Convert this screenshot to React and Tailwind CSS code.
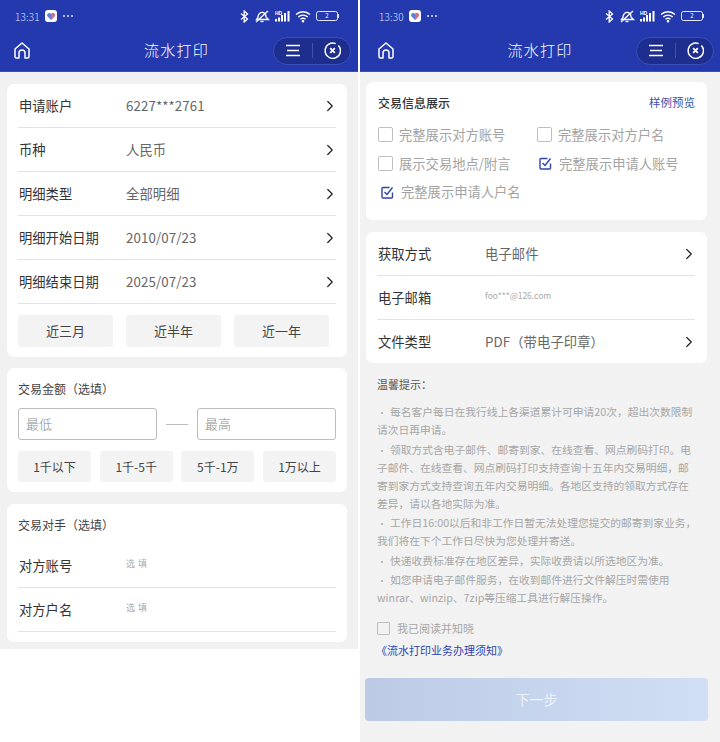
import { ChevronRight } from "lucide-react";

const FONT = "[font-family:'Noto_Sans_CJK_SC','Noto_Sans',sans-serif]";

function StatusBar({ time, pl }) {
  return (
    <div className={`flex h-[30px] items-center justify-between pt-[2px] text-white ${pl}`}>
      <div className="flex items-center">
        <span className="w-[24px] text-[10px] font-light tracking-[0.2px] text-[#dfe3f6]">{time}</span>
        <div className="ml-[6px] flex h-[12px] w-[12px] items-center justify-center rounded-[3px] bg-white">
          <svg width="8" height="7" viewBox="0 0 8 7">
            <path d="M4 7 0.6 3.4C-.6 1.8.7 0 2.2 0 3 0 3.6.4 4 1 4.4.4 5 0 5.8 0 7.3 0 8.600 1.800 7.400 3.400Z" fill="#5b7fd6" />
            <path d="M4 7 4 1C4.400.4 5 0 5.800 0 7.300 0 8.600 1.800 7.400 3.400Z" fill="#e0668c" />
          </svg>
        </div>
        <span className="ml-[6px] flex gap-[2px]">
          <i className="h-[2px] w-[2px] rounded-full bg-[#dfe3f6]" />
          <i className="h-[2px] w-[2px] rounded-full bg-[#dfe3f6]" />
          <i className="h-[2px] w-[2px] rounded-full bg-[#dfe3f6]" />
        </span>
      </div>
      <div className="flex items-center gap-[4px]">
        <svg width="9" height="13" viewBox="0 0 9 13" fill="none" stroke="#fff" strokeWidth="1.300">
          <path d="M1 3.500 7.500 9 4.200 12V1L7.500 4 1 9.500" />
        </svg>
        <svg width="18" height="13" viewBox="0 0 18 13" fill="none" stroke="#fff" strokeWidth="1.300">
          <path d="M5 6.500C6 3 8 2 10 2.500 12 3 13 4.500 13 7L15.500 9.500H3.500L5 7.500Z" />
          <path d="M7.500 11.500H10.500" />
          <path d="M3 12 15 1" />
        </svg>
        <svg width="16" height="13" viewBox="0 0 16 13">
          <rect x="0" y="9" width="2" height="2.500" fill="#fff" />
          <rect x="3" y="7.500" width="2" height="4" fill="#fff" />
          <rect x="6" y="5" width="2" height="6.500" fill="#fff" />
          <rect x="9" y="3" width="2" height="8.500" fill="#fff" />
          <rect x="12.500" y="1" width="2" height="10.500" fill="#fff" />
          <text x="0" y="5" fontSize="5" fontWeight="700" fill="#fff" fontFamily="Liberation Sans">HD</text>
        </svg>
        <svg width="16" height="13" viewBox="0 0 16 13" fill="none" stroke="#fff" strokeWidth="1.400">
          <path d="M1 4.500C5 .8 11 .8 15 4.500" />
          <path d="M3.300 7C6 4.500 10 4.500 12.700 7" />
          <path d="M5.500 9.300C7 8 9 8 10.500 9.300" />
          <circle cx="8" cy="11.300" r=".6" />
        </svg>
        <div className="ml-[1px] flex items-center">
          <div className="flex h-[10px] w-[22px] items-center justify-center rounded-[2.500px] border border-[#e4e7f6] text-[6px] leading-none text-white">2</div>
          <div className="h-[4px] w-[1px] bg-[#e4e7f6]" />
        </div>
      </div>
    </div>
  );
}

function Header({ time, statusPl, navPl, navPr, barPr, titleShift }) {
  return (
    <div className={`h-[72px] shrink-0 border-b border-[#3d50b6] bg-[#2439ae] ${FONT}`}>
      <div className={barPr}>
        <StatusBar time={time} pl={statusPl} />
      </div>
      <div className={`flex h-[41px] items-center justify-between ${navPl} ${navPr}`}>
        <svg width="16" height="17" viewBox="0 0 16 17" fill="none" stroke="#fff" strokeWidth="1.500" strokeLinejoin="round">
          <path d="M1 7 8 1l7 6v7.500a1.500 1.500 0 0 1-1.500 1.500H11v-5a3 3 0 0 0-6 0v5H2.500A1.500 1.500 0 0 1 1 14.500Z" />
        </svg>
        <span className={`${titleShift} text-[15px] font-light tracking-[1.200px] text-white [font-family:'Noto_Sans_CJK_JP',sans-serif]`}>流水打印</span>
        <div className="flex h-[28px] w-[78px] items-center justify-between rounded-full border border-[#3a4fb8] bg-[#1d2e8f] pr-[9px] pl-[12px]">
          <svg width="14" height="13" viewBox="0 0 14 13" fill="none" stroke="#fff" strokeWidth="1.500">
            <path d="M0 1.500H14M1 6.500H13M0 11.500H14" />
          </svg>
          <div className="h-[15px] w-px bg-[#3f52b3]" />
          <svg width="17" height="17" viewBox="0 0 16 16" fill="none" stroke="#fff" strokeWidth="1.400">
            <path d="M13.500 3.200A7.200 7.200 0 1 1 11 1.500" />
            <path d="M5.800 5.800l4.400 4.400M10.200 5.800l-4.400 4.400" strokeWidth="1.700" />
          </svg>
        </div>
      </div>
    </div>
  );
}

function Row({ label, value, arrow, small, h = "h-[44px]" }) {
  return (
    <div className={`flex items-center border-b border-[#e3e3e3] ${h}`}>
      <span className="w-[107px] shrink-0 pl-px text-[13.300px] text-[#333]">{label}</span>
      {small === "hint" && <span className="-mt-[3px] pl-px text-[9px] tracking-[3px] text-[#aaa]">{value}</span>}
      {small === "mail" && <span className="-mt-[4px] pl-px text-[8.500px] text-[#aaa]">{value}</span>}
      {!small && <span className="pl-px text-[13.300px] tracking-[0.100px] text-[#666]">{value}</span>}
      {arrow && <ChevronRight className="-mr-[3px] ml-auto text-[#222]" size={18} strokeWidth={1.600} />}
    </div>
  );
}

function Chip({ children, className }) {
  return (
    <div className={`flex items-center justify-center rounded-[3px] bg-[#f3f3f3] text-[#444] ${className}`}>
      {children}
    </div>
  );
}

function Money({ text }) {
  return (
    <div className="flex h-[32px] w-[139px] items-center rounded-[3px] border border-[#bdbdbd] px-[7px] text-[13px] font-light text-[#888]">
      {text}
    </div>
  );
}

function Left() {
  return (
    <div className="flex w-[358px] shrink-0 flex-col">
      <Header
        time="13:31"
        statusPl="pl-[15px]"
        barPr="pr-[19px]"
        navPl="pl-[14px]"
        navPr="pr-[7px]"
        titleShift="translate-x-[25px]"
      />
      <div className="flex h-[577px] flex-col bg-[#f1f1f1] pt-[12px] pr-[11px] pl-[7px]">
        <div className="h-[273px] rounded-[7px] bg-white px-[11px]">
          <Row label="申请账户" value="6227***2761" arrow />
          <Row label="币种" value="人民币" arrow />
          <Row label="明细类型" value="全部明细" arrow />
          <Row label="明细开始日期" value="2010/07/23" arrow />
          <Row label="明细结束日期" value="2025/07/23" arrow />
          <div className="mt-[11px] flex gap-[13px]">
            <Chip className="h-[32px] w-[95px] text-[13px]">近三月</Chip>
            <Chip className="h-[32px] w-[95px] text-[13px]">近半年</Chip>
            <Chip className="h-[32px] w-[95px] text-[13px]">近一年</Chip>
          </div>
        </div>
        <div className="mt-[11px] h-[124px] rounded-[7px] bg-white px-[11px] pt-[12px]">
          <div className="h-[18px] text-[12px] leading-[18px] text-[#444]">交易金额（选填）</div>
          <div className="mt-[10px] flex items-center justify-between">
            <Money text="最低" />
            <div className="h-px w-[22px] bg-[#bdbdbd]" />
            <Money text="最高" />
          </div>
          <div className="mt-[11px] flex justify-between">
            <Chip className="h-[31px] w-[73px] text-[12px]">1千以下</Chip>
            <Chip className="h-[31px] w-[73px] text-[12px]">1千-5千</Chip>
            <Chip className="h-[31px] w-[73px] text-[12px]">5千-1万</Chip>
            <Chip className="h-[31px] w-[73px] text-[12px]">1万以上</Chip>
          </div>
        </div>
        <div className="mt-[12px] h-[138px] rounded-[7px] bg-white px-[11px] pt-[12px]">
          <div className="h-[18px] text-[12px] leading-[18px] text-[#444]">交易对手（选填）</div>
          <Row label="对方账号" value="选填" small="hint" h="h-[54px] pt-[10px]" />
          <Row label="对方户名" value="选填" small="hint" />
        </div>
      </div>
    </div>
  );
}

function Box({ checked, className = "" }) {
  if (checked) {
    return (
      <svg className={`shrink-0 ${className}`} width="13" height="13" viewBox="0 0 13 13" fill="none" stroke="#2f45ad" strokeWidth="1.400">
        <path d="M11.500 6.500V11a1 1 0 0 1-1 1H2a1 1 0 0 1-1-1V2.500a1 1 0 0 1 1-1h6.500" />
        <path d="M3.500 6 6 8.500 11.500 1.500" />
      </svg>
    );
  }
  return <div className={`h-[15px] w-[15px] shrink-0 rounded-[2px] border border-[#bfbfbf] ${className}`} />;
}

function Opt({ checked, text, w, className = "" }) {
  return (
    <div className={`flex items-center ${w} ${className}`}>
      <Box checked={checked} className={checked ? "ml-[2px]" : ""} />
      <span className={`${checked ? "ml-[7px]" : "ml-[6px]"} text-[13.300px] text-[#a3a3a3]`}>{text}</span>
    </div>
  );
}

const tips = [
  "每名客户每日在我行线上各渠道累计可申请20次，超出次数限制请次日再申请。",
  "领取方式含电子邮件、邮寄到家、在线查看、网点刷码打印。电子邮件、在线查看、网点刷码打印支持查询十五年内交易明细，邮寄到家方式支持查询五年内交易明细。各地区支持的领取方式存在差异，请以各地实际为准。",
  "工作日16:00以后和非工作日暂无法处理您提交的邮寄到家业务，我们将在下个工作日尽快为您处理并寄送。",
  "快递收费标准存在地区差异，实际收费请以所选地区为准。",
  "如您申请电子邮件服务，在收到邮件进行文件解压时需使用winrar、winzip、7zip等压缩工具进行解压操作。",
];

function Right() {
  return (
    <div className="flex h-[742px] w-[360px] shrink-0 flex-col bg-[#f2f2f2]">
      <Header
        time="13:30"
        statusPl="pl-[19px]"
        barPr="pr-[16px]"
        navPl="pl-[18px]"
        navPr="pr-[6px]"
        titleShift="translate-x-[25px]"
      />
      <div className="flex flex-1 flex-col pt-[10px] pr-[13px] pl-[6px]">
        <div className="h-[138px] rounded-[7px] bg-white px-[12px] pt-[12px]">
          <div className="flex items-center justify-between">
            <span className="text-[12px] font-medium text-[#333]">交易信息展示</span>
            <span className="text-[11.500px] text-[#3b50ad]">样例预览</span>
          </div>
          <div className="mt-[8px] flex h-[29px] items-center">
            <Opt text="完整展示对方账号" w="w-[159px]" />
            <Opt text="完整展示对方户名" />
          </div>
          <div className="flex h-[29px] items-center">
            <Opt text="展示交易地点/附言" w="w-[159px]" />
            <Opt checked text="完整展示申请人账号" />
          </div>
          <div className="flex h-[28px] items-center">
            <Opt checked text="完整展示申请人户名" className="ml-[1px]" />
          </div>
        </div>
        <div className="mt-[12px] h-[131px] overflow-hidden rounded-[7px] bg-white pr-[12px] pl-[11px]">
          <Row label="获取方式" value="电子邮件" arrow />
          <Row label="电子邮箱" value="foo***@126.com" small="mail" />
          <Row label="文件类型" value="PDF（带电子印章）" arrow />
        </div>
        <div className="pr-[10px] pl-[11px] text-[10.750px] text-[#a6a6a6]">
          <div className="mt-[12px] text-[11px] leading-[18px] text-[#555]">温馨提示：</div>
          <div className="mt-[10px] flex flex-col gap-[1.500px]">
            {tips.map((t) => (
              <p key={t} className="leading-[18px]">
                <span className="mr-[7px] ml-[4px] inline-block h-[2px] w-[2px] rounded-full bg-[#a6a6a6] align-middle" />
                {t}
              </p>
            ))}
          </div>
          <div className="mt-[13px] flex items-center">
            <div className="h-[13px] w-[13px] rounded-[1px] border border-[#bfbfbf]" />
            <span className="ml-[7px] text-[11px] text-[#a6a6a6]">我已阅读并知晓</span>
          </div>
          <div className="mt-[5px] -ml-[1px] text-[11px] text-[#2f45ad]">《流水打印业务办理须知》</div>
        </div>
        <div className="mt-[20px] -mr-px -ml-px flex h-[43px] items-center justify-center rounded-[4px] bg-gradient-to-r from-[#bccae6] to-[#d0dff5] text-[14px] text-[#eef2fa]">
          下一步
        </div>
      </div>
    </div>
  );
}

export default function App() {
  return (
    <div className={`flex h-[742px] w-[720px] gap-[2px] overflow-hidden bg-white ${FONT}`}>
      <Left />
      <Right />
    </div>
  );
}
